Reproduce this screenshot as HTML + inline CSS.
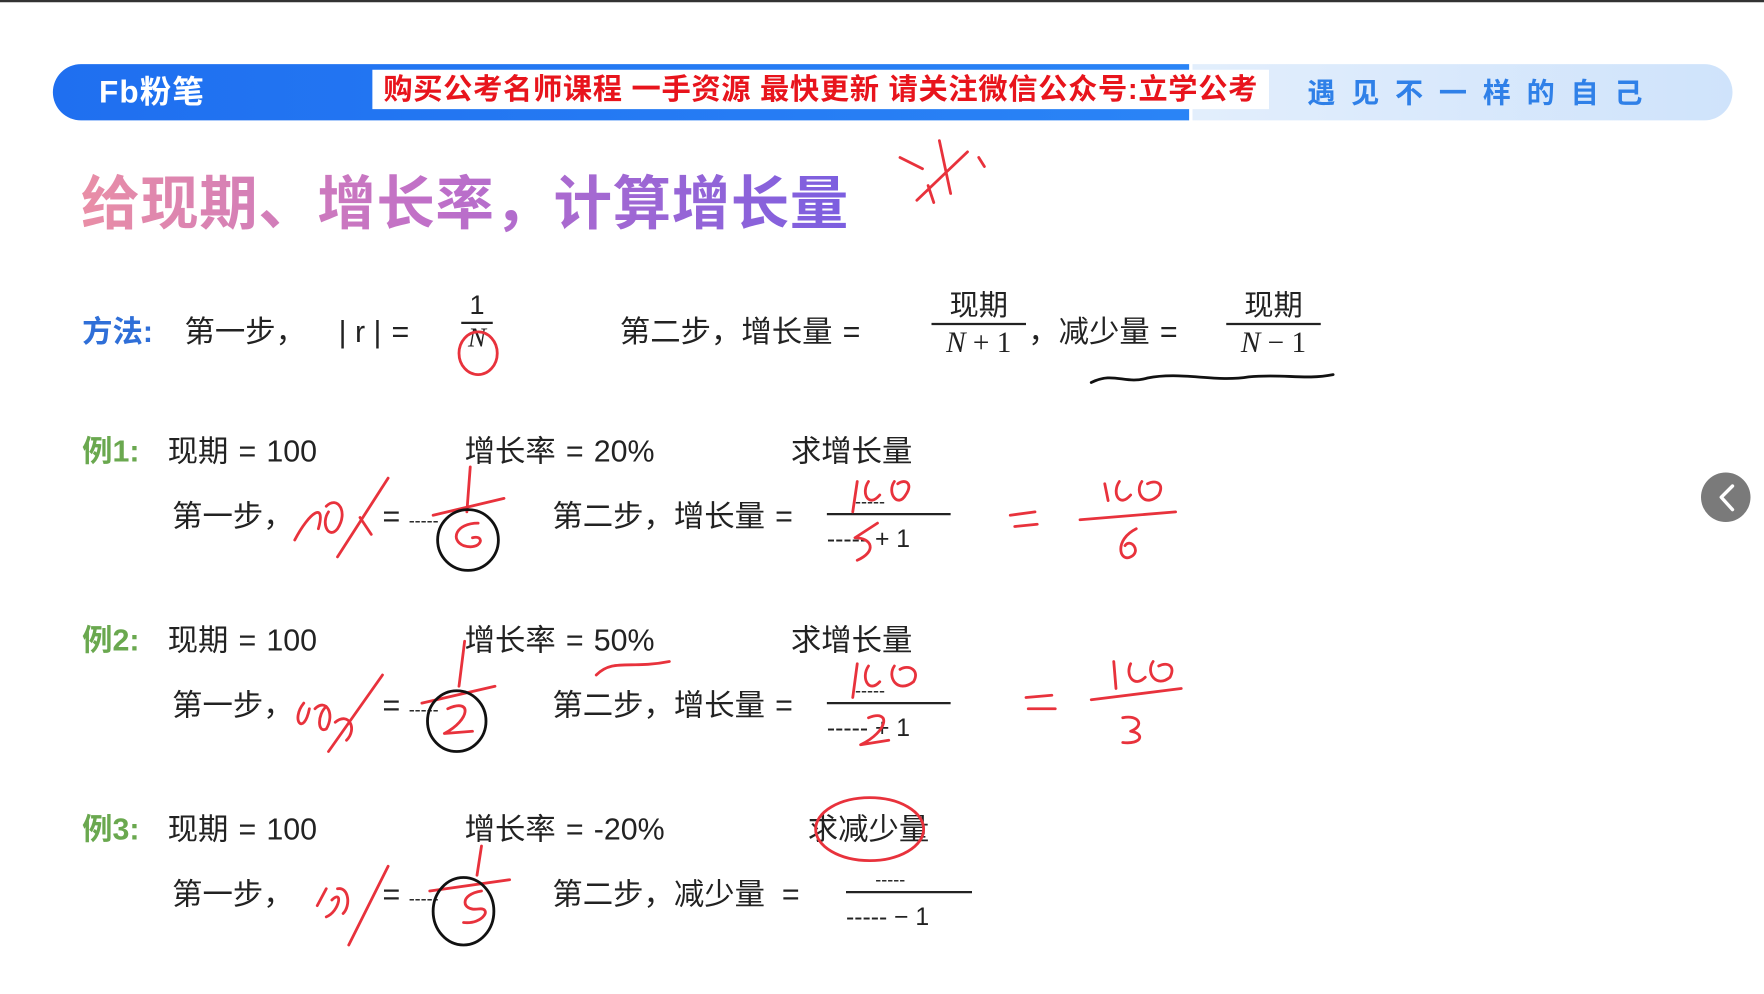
<!DOCTYPE html>
<html><head><meta charset="utf-8"><style>
html,body{margin:0;padding:0;background:#fff;width:1764px;height:994px;overflow:hidden}
#w{position:relative;width:1568px;height:884px;transform:scale(1.125);transform-origin:0 0;font-family:"Liberation Sans","Noto Sans CJK SC",sans-serif;color:#222}
.a{position:absolute;white-space:nowrap}
.t{font-size:27px;line-height:30px}
.g{color:#6aa84f;font-weight:bold}
.frac{position:absolute;text-align:center}
.frac .l{border-top:2px solid #222}
.e{margin:0 9px}
svg{position:absolute;left:0;top:0}
</style></head><body><div id="w">
<div class="a" style="left:0;top:0;width:1568px;height:2px;background:#333"></div>
<div class="a" style="left:1060px;top:57px;width:480px;height:50px;border-radius:0 25px 25px 0;background:linear-gradient(90deg,#e2eefc,#cfe3fb)"></div>
<div class="a" style="left:47px;top:57px;width:1010px;height:50px;border-radius:25px 0 0 25px;background:linear-gradient(90deg,#1f6ff0,#2a84f6)"></div>
<div class="a" style="left:88px;top:64px;font-size:28px;font-weight:bold;color:#fff;line-height:36px;letter-spacing:1px">Fb粉笔</div>
<div class="a" style="left:331px;top:62px;width:797px;height:35px;background:#fff;color:#e8141c;font-size:26px;font-weight:bold;line-height:35px;text-align:center;letter-spacing:0.6px">购买公考名师课程 一手资源 最快更新 请关注微信公众号:立学公考</div>
<div class="a" style="left:1162px;top:66px;font-size:25px;font-weight:bold;color:#2f80e8;letter-spacing:14px;line-height:34px">遇见不一样的自己</div>
<div class="a" style="left:72px;top:150px;font-size:52px;font-weight:bold;line-height:64px;letter-spacing:0.5px;background:linear-gradient(90deg,#e98ea6,#c070c8 45%,#7b5ee0);-webkit-background-clip:text;background-clip:text;color:transparent">给现期、增长率，计算增长量</div>

<div class="a t" style="left:73px;top:280px;color:#2f6fd8;font-weight:bold">方法:</div>
<div class="a t" style="left:164px;top:280px">第一步，&nbsp;&nbsp;<span style="margin-left:14px">| r |</span><span class="e">=</span></div>
<div class="frac" style="left:410px;top:258px;width:28px;font-size:24px"><div>1</div><div class="l" style="font-style:italic;font-family:'Liberation Serif',serif">N</div></div>
<div class="a t" style="left:551px;top:280px">第二步，增长量<span class="e">=</span></div>
<div class="frac" style="left:828px;top:255px;width:84px;font-size:26px;line-height:32px"><div>现期</div><div class="l" style="font-family:'Liberation Serif',serif"><i>N</i> + 1</div></div>
<div class="a t" style="left:914px;top:280px">，减少量<span class="e">=</span></div>
<div class="frac" style="left:1090px;top:255px;width:84px;font-size:26px;line-height:32px"><div>现期</div><div class="l" style="font-family:'Liberation Serif',serif"><i>N</i> − 1</div></div>

<div class="a t" style="left:73px;top:386px"><span class="g">例1:</span></div>
<div class="a t" style="left:149px;top:386px">现期<span class="e">=</span>100</div>
<div class="a t" style="left:413px;top:386px">增长率<span class="e">=</span>20%</div>
<div class="a t" style="left:703px;top:386px">求增长量</div>
<div class="a t" style="left:153px;top:444px">第一步，</div>
<div class="a t" style="left:340px;top:444px">= <span style="font-size:16px">-----</span></div>
<div class="a t" style="left:491px;top:444px">第二步，增长量<span class="e">=</span></div>
<div class="a" style="left:735px;top:456px;width:110px;border-top:2px solid #222"></div>
<div class="a t" style="left:735px;top:464px;font-size:22px">----- + 1</div>
<div class="a" style="left:760px;top:438px;font-size:16px">-----</div>

<div class="a t" style="left:73px;top:554px"><span class="g">例2:</span></div>
<div class="a t" style="left:149px;top:554px">现期<span class="e">=</span>100</div>
<div class="a t" style="left:413px;top:554px">增长率<span class="e">=</span>50%</div>
<div class="a t" style="left:703px;top:554px">求增长量</div>
<div class="a t" style="left:153px;top:612px">第一步，</div>
<div class="a t" style="left:340px;top:612px">= <span style="font-size:16px">-----</span></div>
<div class="a t" style="left:491px;top:612px">第二步，增长量<span class="e">=</span></div>
<div class="a" style="left:735px;top:624px;width:110px;border-top:2px solid #222"></div>
<div class="a t" style="left:735px;top:632px;font-size:22px">----- + 1</div>
<div class="a" style="left:760px;top:606px;font-size:16px">-----</div>

<div class="a t" style="left:73px;top:722px"><span class="g">例3:</span></div>
<div class="a t" style="left:149px;top:722px">现期<span class="e">=</span>100</div>
<div class="a t" style="left:413px;top:722px">增长率<span class="e">=</span>-20%</div>
<div class="a t" style="left:718px;top:722px">求减少量</div>
<div class="a t" style="left:153px;top:780px">第一步，</div>
<div class="a t" style="left:340px;top:780px">= <span style="font-size:16px">-----</span></div>
<div class="a t" style="left:491px;top:780px">第二步，减少量 &nbsp;=</div>
<div class="a" style="left:752px;top:792px;width:112px;border-top:2px solid #222"></div>
<div class="a t" style="left:752px;top:800px;font-size:22px">----- − 1</div>
<div class="a" style="left:778px;top:774px;font-size:16px">-----</div>

<div class="a" style="left:1512px;top:420px;width:44px;height:44px;border-radius:50%;background:#7a7a7a"></div>

<svg width="1568" height="884" fill="none" stroke-linecap="round" stroke-linejoin="round">
<g stroke="#e8323c" stroke-width="2.5">
<path d="M800 140 L820 150 M835 125 L845 172 M815 178 L860 135 M825 165 L830 180 M870 140 L875 148"/>
<ellipse cx="425" cy="314" rx="17" ry="19"/>
<path d="M262 480 C275 455 290 445 283 470 M290 450 C300 440 310 455 300 470 C292 480 285 465 292 455 M300 495 L345 425 M320 460 L330 475"/>
<path d="M418 415 L415 455 M385 458 L448 443 M425 465 C405 465 400 480 412 485 C428 490 432 475 420 478"/>
<path d="M762 428 L758 455 M772 428 C765 438 772 452 782 440 M795 428 C788 438 798 452 805 440 C812 430 805 425 798 430"/>
<path d="M780 465 L760 478 C775 478 780 490 762 498"/>
<path d="M898 458 L920 455 M902 468 L922 466 M960 462 L1045 455 M982 430 L985 445 M995 428 C988 438 995 452 1005 440 M1015 428 C1008 438 1018 452 1030 440 C1035 430 1028 426 1020 430 M1010 470 C990 480 995 500 1005 495 C1015 490 1005 478 1000 485"/>
<path d="M270 625 C258 640 270 655 275 630 M280 630 C290 620 298 635 290 648 C282 652 282 635 290 628 M298 642 C310 632 318 648 308 658 M292 668 L340 600 M530 600 C545 585 560 595 595 588"/>
<path d="M413 570 L408 610 M375 625 L440 610 M398 630 C420 620 418 640 395 652 L420 650"/>
<path d="M762 590 L758 620 M772 592 C765 602 772 617 782 606 M795 592 C788 602 798 617 812 606 C818 596 808 590 800 595"/>
<path d="M772 638 C792 630 790 650 765 662 L790 658"/>
<path d="M912 620 L935 618 M914 630 L938 630 M970 622 L1050 612 M990 588 L992 612 M1005 590 C1000 600 1008 612 1018 602 M1025 588 C1018 598 1028 612 1040 602 C1045 592 1038 588 1030 592 M998 638 C1012 635 1018 645 1005 650 C1018 652 1015 662 998 660"/>
<path d="M290 790 L282 805 M295 800 C305 790 302 810 290 815 M300 790 C310 788 312 805 305 812 M310 840 L345 770"/>
<path d="M428 752 L424 778 M382 792 L453 782 M428 792 C408 795 410 810 425 808 C438 806 430 822 412 820"/>
<ellipse cx="773" cy="737" rx="48" ry="28"/>
</g>
<g stroke="#111" stroke-width="2.5">
<path d="M970 340 C990 330 1000 342 1020 336 C1050 330 1080 340 1110 335 C1140 332 1160 338 1185 333"/>
<ellipse cx="416" cy="480" rx="27" ry="27"/>
<ellipse cx="406" cy="641" rx="26" ry="27"/>
<ellipse cx="412" cy="810" rx="27" ry="30"/>
</g>
<path d="M1540 432 L1530 442 L1540 453" stroke="#fff" stroke-width="3"/>
</svg>
</div></body></html>
